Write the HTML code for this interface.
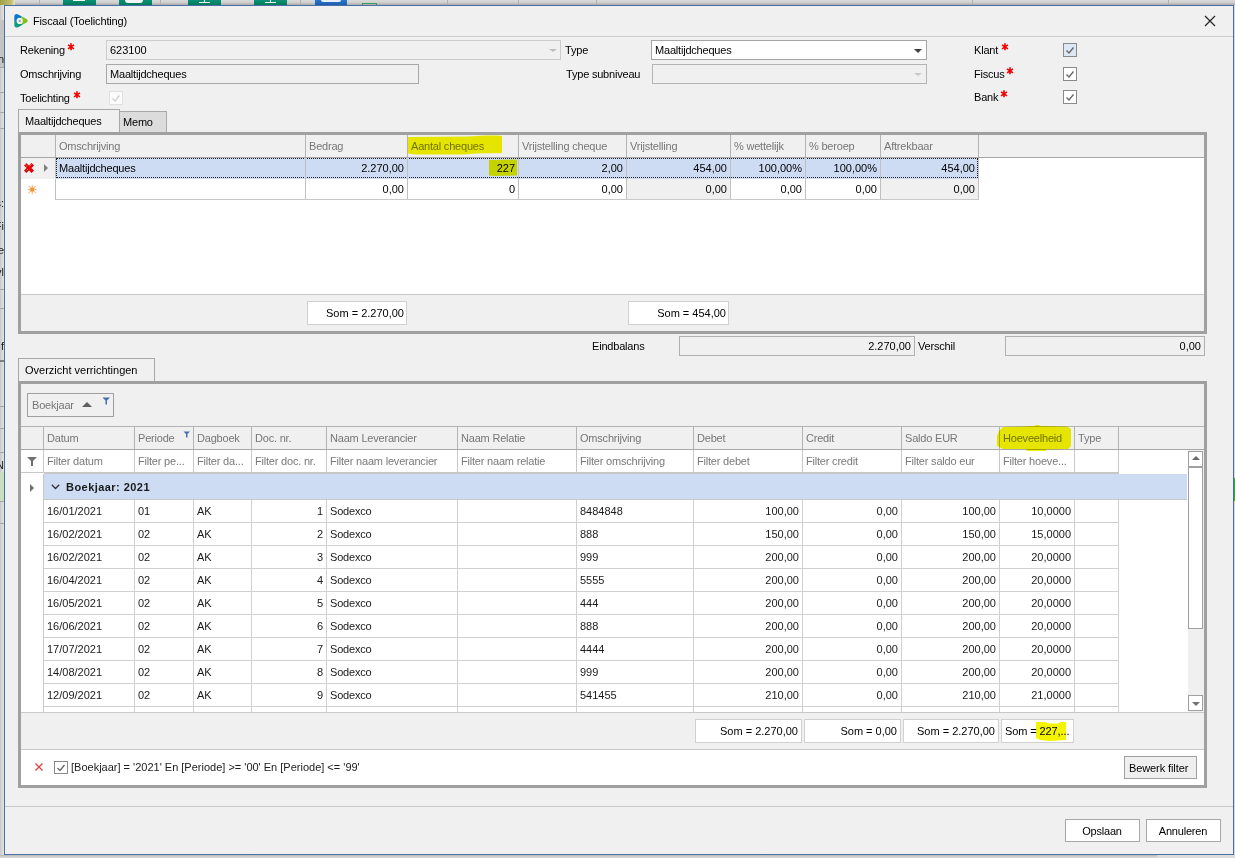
<!DOCTYPE html>
<html><head><meta charset="utf-8"><style>
html,body{margin:0;padding:0;width:1235px;height:858px;overflow:hidden;background:#d0d0d0;}
#root{position:absolute;left:0;top:0;width:1235px;height:858px;will-change:transform;}
.a{position:absolute;}
.t{position:absolute;font-family:"Liberation Sans",sans-serif;font-size:11px;line-height:13px;white-space:pre;color:#000;}
</style></head><body><div id="root">
<div class="a" style="left:0;top:0;width:1235px;height:5px;background:linear-gradient(#dadada,#cfcfcf 50%,#a9a9a9)"></div>
<div class="a" style="left:0;top:0;width:15px;height:5px;background:linear-gradient(90deg,#a0a048,#c0c070 75%,#e8e8c0)"></div>
<div class="a" style="left:63px;top:0;width:33px;height:5px;background:linear-gradient(#0a9274,#007a5c)"></div>
<div class="a" style="left:119px;top:0;width:33px;height:5px;background:linear-gradient(#0a9274,#007a5c)"></div>
<div class="a" style="left:188px;top:0;width:33px;height:5px;background:linear-gradient(#0a9274,#007a5c)"></div>
<div class="a" style="left:254px;top:0;width:33px;height:5px;background:linear-gradient(#0a9274,#007a5c)"></div>
<div class="a" style="left:73px;top:0px;width:12px;height:1px;background:#ffffff;"></div>
<div class="a" style="left:125px;top:0;width:18px;height:3px;background:#f4f4f4;border-radius:0 0 3px 3px"></div>
<div class="a" style="left:204px;top:0px;width:1px;height:3px;background:#ffffff;"></div>
<div class="a" style="left:199px;top:2px;width:11px;height:1px;background:#e8f4f0;"></div>
<div class="a" style="left:270px;top:0px;width:1px;height:3px;background:#ffffff;"></div>
<div class="a" style="left:265px;top:2px;width:11px;height:1px;background:#e8f4f0;"></div>
<div class="a" style="left:315px;top:0;width:32px;height:5px;background:linear-gradient(#2a78d0,#1a5cb0)"></div>
<div class="a" style="left:321px;top:0;width:20px;height:2px;background:#e8eef8;border-radius:0 0 3px 3px"></div>
<div class="a" style="left:362px;top:3px;width:15px;height:1px;background:#3a9a60;"></div>
<div class="a" style="left:362px;top:4px;width:1px;height:1px;background:#3a9a60;"></div>
<div class="a" style="left:376px;top:4px;width:1px;height:1px;background:#3a9a60;"></div>
<div class="a" style="left:39px;top:0px;width:1px;height:5px;background:#b8b0b0;"></div>
<div class="a" style="left:160px;top:0px;width:1px;height:5px;background:#b8b0b0;"></div>
<div class="a" style="left:300px;top:0px;width:1px;height:5px;background:#b8b0b0;"></div>
<div class="a" style="left:447px;top:0px;width:1px;height:5px;background:#b8b0b0;"></div>
<div class="a" style="left:518px;top:0px;width:1px;height:5px;background:#b8b0b0;"></div>
<div class="a" style="left:596px;top:0px;width:1px;height:5px;background:#b8b0b0;"></div>
<div class="a" style="left:972px;top:0px;width:1px;height:5px;background:#b8b0b0;"></div>
<div class="a" style="left:1168px;top:0px;width:1px;height:5px;background:#b8b0b0;"></div>
<div class="a" style="left:0;top:5px;width:4px;height:850px;background:linear-gradient(90deg,#c8c8c8,#e4e4e4)"></div>
<div class="a" style="left:0px;top:20px;width:4px;height:47px;background:#c4c4c4;"></div>
<div class="a" style="left:0px;top:67px;width:4px;height:1px;background:#a8a8a8;"></div>
<div class="a" style="left:0px;top:92px;width:4px;height:1px;background:#a8a8a8;"></div>
<div class="a" style="left:0px;top:112px;width:4px;height:1px;background:#a8a8a8;"></div>
<div class="a" style="left:0px;top:128px;width:4px;height:1px;background:#a8a8a8;"></div>
<div class="a" style="left:0px;top:289px;width:4px;height:1px;background:#a8a8a8;"></div>
<div class="a" style="left:0px;top:308px;width:4px;height:1px;background:#a8a8a8;"></div>
<div class="a" style="left:0px;top:406px;width:4px;height:1px;background:#a8a8a8;"></div>
<div class="a" style="left:0px;top:428px;width:4px;height:1px;background:#a8a8a8;"></div>
<div class="a" style="left:0px;top:452px;width:4px;height:1px;background:#a8a8a8;"></div>
<div class="a" style="left:0px;top:501px;width:4px;height:1px;background:#a8a8a8;"></div>
<div class="a" style="left:0px;top:523px;width:4px;height:1px;background:#a8a8a8;"></div>
<div class="a" style="left:0px;top:360px;width:4px;height:2px;background:#808080;"></div>
<div class="a" style="left:0px;top:472px;width:4px;height:29px;background:#c8e0c0;"></div>
<div class="a" style="left:0;top:0;width:4px;height:858px;overflow:hidden"><div class="t" style="right:0;top:53px;color:#202020">n</div><div class="t" style="right:0;top:197px;color:#202020">s:</div><div class="t" style="right:0;top:220px;color:#202020">Fi</div><div class="t" style="right:0;top:244px;color:#202020">e</div><div class="t" style="right:0;top:266px;color:#202020">yl</div><div class="t" style="right:0;top:340px;color:#202020">f</div><div class="t" style="right:0;top:459px;color:#202020">N</div></div>
<div class="a" style="left:1234px;top:5px;width:1px;height:853px;background:#d8d8d8;"></div>
<div class="a" style="left:1234px;top:478px;width:1px;height:23px;background:#40a040;"></div>
<div class="a" style="left:0;top:855px;width:1235px;height:3px;background:linear-gradient(#b8b8b8,#e0e0e0)"></div>
<div class="a" style="left:1157px;top:855px;width:79px;height:3px;background:#dcdcdc;"></div>
<div class="a" style="left:4px;top:5px;width:1230px;height:850px;background:#f0f0f0;box-sizing:border-box;border:1px solid #4a6fa5;"></div>
<div class="a" style="left:5px;top:36px;width:1228px;height:1px;background:#cfcfcf;"></div>
<svg class="a" style="left:13px;top:13px" width="17" height="17" viewBox="0 0 17 17">
<defs><clipPath id="tri"><path d="M1.3 4.2 Q1.3 0.2 5.2 1.4 L13.6 6 Q15.9 7.8 13.6 9.6 L5.2 14.2 Q1.3 15.6 1.3 11.6 Z"/></clipPath></defs>
<g clip-path="url(#tri)">
<path d="M6.7 7.8 L-19.3 8.8 L-19 -14 L17.2 -14.2 Z" fill="#0a7bcc"/>
<path d="M6.7 7.8 L17.2 -14.2 L30 -14 L30 26 L18.2 25.8 Z" fill="#82c01e"/>
<path d="M6.7 7.8 L18.2 25.8 L-19 26 L-19.3 8.8 Z" fill="#0d9c7e"/>
</g>
<circle cx="6.7" cy="7.9" r="3.1" fill="#f2f2f2"/>
<circle cx="6.8" cy="7.9" r="1.2" fill="#aaaaaa"/>
</svg>
<div class="t " style="left:33px;top:15px;letter-spacing:-0.15px">Fiscaal (Toelichting)</div>
<svg class="a" style="left:1204px;top:15px" width="12" height="12" viewBox="0 0 12 12"><path d="M1 1 L11 11 M11 1 L1 11" stroke="#222" stroke-width="1.2"/></svg>
<div class="t " style="left:20px;top:44px;letter-spacing:-0.2px;">Rekening</div>
<svg class="a" style="left:67px;top:43px" width="8" height="8" viewBox="0 0 8 8"><path d="M4 0.3 V7.3 M1 1.8 L7 5.8 M7 1.8 L1 5.8" stroke="#f00000" stroke-width="1.6"/></svg>
<div class="t " style="left:20px;top:68px;letter-spacing:-0.2px;">Omschrijving</div>
<div class="t " style="left:20px;top:92px;letter-spacing:-0.2px;">Toelichting</div>
<svg class="a" style="left:73px;top:91px" width="8" height="8" viewBox="0 0 8 8"><path d="M4 0.3 V7.3 M1 1.8 L7 5.8 M7 1.8 L1 5.8" stroke="#f00000" stroke-width="1.6"/></svg>
<div class="a" style="left:106px;top:40px;width:455px;height:20px;background:#f0f0f0;box-sizing:border-box;border:1px solid #cccccc;"></div>
<div class="t " style="left:110px;top:44px;">623100</div>
<div class="a" style="left:549px;top:49px;width:0;height:0;border-left:4px solid transparent;border-right:4px solid transparent;border-top:3px solid #c0c0c0"></div>
<div class="a" style="left:106px;top:64px;width:313px;height:20px;background:#f0f0f0;box-sizing:border-box;border:1px solid #a8a8a8;"></div>
<div class="t " style="left:110px;top:68px;letter-spacing:-0.2px;">Maaltijdcheques</div>
<div class="a" style="left:109px;top:91px;width:14px;height:14px;background:#fbfbfb;box-sizing:border-box;border:1px solid #e0e0e0;"></div>
<svg class="a" style="left:109px;top:91px" width="14" height="14"><path d="M3.5 7.5 L6 10 L10.5 4.5" stroke="#d0d0d0" stroke-width="1.3" fill="none"/></svg>
<div class="t " style="left:565px;top:44px;letter-spacing:-0.2px;">Type</div>
<div class="t " style="left:566px;top:68px;letter-spacing:-0.2px;">Type subniveau</div>
<div class="a" style="left:651px;top:40px;width:276px;height:20px;background:#ffffff;box-sizing:border-box;border:1px solid #a5a5a5;"></div>
<div class="t " style="left:655px;top:44px;letter-spacing:-0.2px;">Maaltijdcheques</div>
<div class="a" style="left:914px;top:49px;width:0;height:0;border-left:4px solid transparent;border-right:4px solid transparent;border-top:4px solid #404040"></div>
<div class="a" style="left:652px;top:64px;width:275px;height:20px;background:#f0f0f0;box-sizing:border-box;border:1px solid #b4b4b4;"></div>
<div class="a" style="left:914px;top:73px;width:0;height:0;border-left:4px solid transparent;border-right:4px solid transparent;border-top:3px solid #c8c8c8"></div>
<div class="t " style="left:974px;top:44px;letter-spacing:-0.2px;">Klant</div>
<svg class="a" style="left:1001px;top:43px" width="8" height="8" viewBox="0 0 8 8"><path d="M4 0.3 V7.3 M1 1.8 L7 5.8 M7 1.8 L1 5.8" stroke="#f00000" stroke-width="1.6"/></svg>
<div class="t " style="left:974px;top:68px;letter-spacing:-0.2px;">Fiscus</div>
<svg class="a" style="left:1006px;top:67px" width="8" height="8" viewBox="0 0 8 8"><path d="M4 0.3 V7.3 M1 1.8 L7 5.8 M7 1.8 L1 5.8" stroke="#f00000" stroke-width="1.6"/></svg>
<div class="t " style="left:974px;top:91px;letter-spacing:-0.2px;">Bank</div>
<svg class="a" style="left:1000px;top:90px" width="8" height="8" viewBox="0 0 8 8"><path d="M4 0.3 V7.3 M1 1.8 L7 5.8 M7 1.8 L1 5.8" stroke="#f00000" stroke-width="1.6"/></svg>
<div class="a" style="left:1063px;top:43px;width:14px;height:14px;background:#dde8f6;box-sizing:border-box;border:1px solid #8a8a8a;"></div>
<svg class="a" style="left:1063px;top:43px" width="14" height="14"><path d="M3.5 7.5 L6 10 L10.5 4.5" stroke="#6a6a6a" stroke-width="1.4" fill="none"/></svg>
<div class="a" style="left:1063px;top:67px;width:14px;height:14px;background:#ffffff;box-sizing:border-box;border:1px solid #8a8a8a;"></div>
<svg class="a" style="left:1063px;top:67px" width="14" height="14"><path d="M3.5 7.5 L6 10 L10.5 4.5" stroke="#6a6a6a" stroke-width="1.4" fill="none"/></svg>
<div class="a" style="left:1063px;top:90px;width:14px;height:14px;background:#ffffff;box-sizing:border-box;border:1px solid #8a8a8a;"></div>
<svg class="a" style="left:1063px;top:90px" width="14" height="14"><path d="M3.5 7.5 L6 10 L10.5 4.5" stroke="#6a6a6a" stroke-width="1.4" fill="none"/></svg>
<div class="a" style="left:119px;top:111px;width:48px;height:23px;background:#dcdcdc;box-sizing:border-box;border:1px solid #a8a8a8;"></div>
<div class="t " style="left:123px;top:116px;letter-spacing:-0.2px;">Memo</div>
<div class="a" style="left:18px;top:109px;width:102px;height:25px;background:#f0f0f0;box-sizing:border-box;border:1px solid #a8a8a8;"></div>
<div class="t " style="left:25px;top:115px;letter-spacing:-0.2px;">Maaltijdcheques</div>
<div class="a" style="left:18px;top:132px;width:1189px;height:3px;background:#a0a0a0;"></div>
<div class="a" style="left:18px;top:132px;width:3px;height:202px;background:#a0a0a0;"></div>
<div class="a" style="left:1204px;top:132px;width:3px;height:202px;background:#a0a0a0;"></div>
<div class="a" style="left:18px;top:331px;width:1189px;height:3px;background:#a0a0a0;"></div>
<div class="a" style="left:21px;top:135px;width:1183px;height:22px;background:#f0f0f0;"></div>
<div class="a" style="left:21px;top:157px;width:1183px;height:1px;background:#a8a8a8;"></div>
<div class="a" style="left:21px;top:158px;width:1183px;height:136px;background:#ffffff;"></div>
<div class="a" style="left:21px;top:294px;width:1183px;height:1px;background:#c8c8c8;"></div>
<div class="a" style="left:21px;top:295px;width:1183px;height:36px;background:#f0f0f0;"></div>
<div class="a" style="left:55px;top:135px;width:1px;height:22px;background:#b4b4b4;"></div>
<div class="a" style="left:305px;top:135px;width:1px;height:22px;background:#b4b4b4;"></div>
<div class="a" style="left:407px;top:135px;width:1px;height:22px;background:#b4b4b4;"></div>
<div class="a" style="left:518px;top:135px;width:1px;height:22px;background:#b4b4b4;"></div>
<div class="a" style="left:626px;top:135px;width:1px;height:22px;background:#b4b4b4;"></div>
<div class="a" style="left:730px;top:135px;width:1px;height:22px;background:#b4b4b4;"></div>
<div class="a" style="left:805px;top:135px;width:1px;height:22px;background:#b4b4b4;"></div>
<div class="a" style="left:880px;top:135px;width:1px;height:22px;background:#b4b4b4;"></div>
<div class="a" style="left:978px;top:135px;width:1px;height:22px;background:#b4b4b4;"></div>
<div class="t " style="left:59px;top:140px;letter-spacing:-0.2px;color:#777777;">Omschrijving</div>
<div class="t " style="left:309px;top:140px;letter-spacing:-0.2px;color:#777777;">Bedrag</div>
<div class="t " style="left:411px;top:140px;letter-spacing:-0.2px;color:#777777;">Aantal cheques</div>
<div class="t " style="left:522px;top:140px;letter-spacing:-0.2px;color:#777777;">Vrijstelling cheque</div>
<div class="t " style="left:630px;top:140px;letter-spacing:-0.2px;color:#777777;">Vrijstelling</div>
<div class="t " style="left:734px;top:140px;letter-spacing:-0.2px;color:#777777;">% wettelijk</div>
<div class="t " style="left:809px;top:140px;letter-spacing:-0.2px;color:#777777;">% beroep</div>
<div class="t " style="left:884px;top:140px;letter-spacing:-0.2px;color:#777777;">Aftrekbaar</div>
<div class="a" style="left:21px;top:158px;width:34px;height:21px;background:#f0f0f0;"></div>
<div class="a" style="left:56px;top:158px;width:922px;height:21px;background:#cddcf3;"></div>
<div class="a" style="left:56px;top:158px;width:922px;height:20px;box-sizing:border-box;border:1px dotted #202020"></div>
<div class="a" style="left:626px;top:179px;width:104px;height:21px;background:#f0f0f0;"></div>
<div class="a" style="left:880px;top:179px;width:98px;height:21px;background:#f0f0f0;"></div>
<div class="a" style="left:55px;top:158px;width:1px;height:42px;background:#c0c0c0;"></div>
<div class="a" style="left:305px;top:158px;width:1px;height:42px;background:#c0c0c0;"></div>
<div class="a" style="left:407px;top:158px;width:1px;height:42px;background:#c0c0c0;"></div>
<div class="a" style="left:518px;top:158px;width:1px;height:42px;background:#c0c0c0;"></div>
<div class="a" style="left:626px;top:158px;width:1px;height:42px;background:#c0c0c0;"></div>
<div class="a" style="left:730px;top:158px;width:1px;height:42px;background:#c0c0c0;"></div>
<div class="a" style="left:805px;top:158px;width:1px;height:42px;background:#c0c0c0;"></div>
<div class="a" style="left:880px;top:158px;width:1px;height:42px;background:#c0c0c0;"></div>
<div class="a" style="left:978px;top:158px;width:1px;height:42px;background:#c0c0c0;"></div>
<div class="a" style="left:56px;top:199px;width:923px;height:1px;background:#c8c8c8;"></div>
<div class="a" style="left:21px;top:178px;width:35px;height:1px;background:#f0f0f0;"></div>
<svg class="a" style="left:23px;top:162px" width="12" height="12" viewBox="0 0 12 12"><path d="M2.2 2.2 L9.8 9.8 M9.8 2.2 L2.2 9.8" stroke="#e00000" stroke-width="3.4"/><path d="M4 6 L6 4 L8 6 L6 8 Z" fill="#f00000"/><path d="M1.8 3.2 L3.4 1.8 M3 4.6 L4.6 3.2 M8.4 2.4 L6.6 4.2 M5 7 L3.4 8.6" stroke="#ffd0d0" stroke-width="0.7" opacity="0.8"/></svg>
<div class="a" style="left:44px;top:164px;width:0;height:0;border-top:4px solid transparent;border-bottom:4px solid transparent;border-left:4px solid #808080"></div>
<svg class="a" style="left:26px;top:183px" width="13" height="13" viewBox="0 0 13 13"><g fill="#f0a050" opacity="0.85"><path d="M6.2 1 L7 4.5 L5.4 4.5 Z M6.2 12 L7 8.5 L5.4 8.5 Z M0.5 6.5 L4 5.7 L4 7.3 Z M12 6.5 L8.5 5.7 L8.5 7.3 Z"/></g><g stroke="#f0a050" stroke-width="1"><path d="M2.6 2.9 L4.5 4.8 M9.8 2.9 L7.9 4.8 M2.6 10.1 L4.5 8.2 M9.8 10.1 L7.9 8.2"/></g><rect x="4.2" y="4.4" width="4" height="4.2" rx="1.2" fill="#ee9236"/></svg>
<div class="t " style="left:59px;top:162px;letter-spacing:-0.2px;">Maaltijdcheques</div>
<div class="t " style="right:831px;top:162px;">2.270,00</div>
<div class="t " style="right:720px;top:162px;">227</div>
<div class="t " style="right:612px;top:162px;">2,00</div>
<div class="t " style="right:508px;top:162px;">454,00</div>
<div class="t " style="right:433px;top:162px;">100,00%</div>
<div class="t " style="right:358px;top:162px;">100,00%</div>
<div class="t " style="right:260px;top:162px;">454,00</div>
<div class="t " style="right:831px;top:183px;">0,00</div>
<div class="t " style="right:720px;top:183px;">0</div>
<div class="t " style="right:612px;top:183px;">0,00</div>
<div class="t " style="right:508px;top:183px;">0,00</div>
<div class="t " style="right:433px;top:183px;">0,00</div>
<div class="t " style="right:358px;top:183px;">0,00</div>
<div class="t " style="right:260px;top:183px;">0,00</div>
<div class="a" style="left:307px;top:301px;width:100px;height:24px;background:#ffffff;box-sizing:border-box;border:1px solid #d0d0d0;"></div>
<div class="t " style="right:831px;top:307px;">Som = 2.270,00</div>
<div class="a" style="left:628px;top:301px;width:101px;height:24px;background:#ffffff;box-sizing:border-box;border:1px solid #d0d0d0;"></div>
<div class="t " style="right:509px;top:307px;">Som = 454,00</div>
<div class="t " style="left:592px;top:340px;letter-spacing:-0.2px;">Eindbalans</div>
<div class="a" style="left:679px;top:336px;width:236px;height:20px;background:#f0f0f0;box-sizing:border-box;border:1px solid #b0b0b0;"></div>
<div class="t " style="right:324px;top:340px;">2.270,00</div>
<div class="t " style="left:918px;top:340px;letter-spacing:-0.2px;">Verschil</div>
<div class="a" style="left:1005px;top:336px;width:200px;height:20px;background:#f0f0f0;box-sizing:border-box;border:1px solid #b0b0b0;"></div>
<div class="t " style="right:34px;top:340px;">0,00</div>
<div class="a" style="left:18px;top:358px;width:137px;height:26px;background:#f0f0f0;box-sizing:border-box;border:1px solid #a8a8a8;"></div>
<div class="t " style="left:25px;top:364px;">Overzicht verrichtingen</div>
<div class="a" style="left:18px;top:381px;width:1189px;height:3px;background:#a0a0a0;"></div>
<div class="a" style="left:18px;top:381px;width:3px;height:407px;background:#a0a0a0;"></div>
<div class="a" style="left:1204px;top:381px;width:3px;height:407px;background:#a0a0a0;"></div>
<div class="a" style="left:18px;top:785px;width:1189px;height:3px;background:#a0a0a0;"></div>
<div class="a" style="left:21px;top:384px;width:1183px;height:42px;background:#f0f0f0;"></div>
<div class="a" style="left:21px;top:426px;width:1183px;height:1px;background:#b4b4b4;"></div>
<div class="a" style="left:27px;top:393px;width:87px;height:24px;background:#f0f0f0;box-sizing:border-box;border:1px solid #a0a0a0;"></div>
<div class="t " style="left:32px;top:399px;letter-spacing:-0.2px;color:#777777;">Boekjaar</div>
<div class="a" style="left:82px;top:402px;width:0;height:0;border-left:5px solid transparent;border-right:5px solid transparent;border-bottom:5px solid #606060"></div>
<svg class="a" style="left:102px;top:397px" width="9" height="8"><path d="M0.5 0.5 H8 L5 3.5 V7.5 H3.5 V3.5 Z" fill="#4a6fb0"/></svg>
<div class="a" style="left:21px;top:427px;width:1183px;height:22px;background:#f0f0f0;"></div>
<div class="a" style="left:21px;top:449px;width:1183px;height:1px;background:#a8a8a8;"></div>
<div class="a" style="left:43px;top:427px;width:1px;height:22px;background:#b4b4b4;"></div>
<div class="a" style="left:134px;top:427px;width:1px;height:22px;background:#b4b4b4;"></div>
<div class="a" style="left:193px;top:427px;width:1px;height:22px;background:#b4b4b4;"></div>
<div class="a" style="left:251px;top:427px;width:1px;height:22px;background:#b4b4b4;"></div>
<div class="a" style="left:326px;top:427px;width:1px;height:22px;background:#b4b4b4;"></div>
<div class="a" style="left:457px;top:427px;width:1px;height:22px;background:#b4b4b4;"></div>
<div class="a" style="left:576px;top:427px;width:1px;height:22px;background:#b4b4b4;"></div>
<div class="a" style="left:693px;top:427px;width:1px;height:22px;background:#b4b4b4;"></div>
<div class="a" style="left:802px;top:427px;width:1px;height:22px;background:#b4b4b4;"></div>
<div class="a" style="left:901px;top:427px;width:1px;height:22px;background:#b4b4b4;"></div>
<div class="a" style="left:999px;top:427px;width:1px;height:22px;background:#b4b4b4;"></div>
<div class="a" style="left:1074px;top:427px;width:1px;height:22px;background:#b4b4b4;"></div>
<div class="a" style="left:1118px;top:427px;width:1px;height:22px;background:#b4b4b4;"></div>
<div class="t " style="left:47px;top:432px;letter-spacing:-0.2px;color:#777777;">Datum</div>
<div class="t " style="left:138px;top:432px;letter-spacing:-0.2px;color:#777777;">Periode</div>
<div class="t " style="left:197px;top:432px;letter-spacing:-0.2px;color:#777777;">Dagboek</div>
<div class="t " style="left:255px;top:432px;letter-spacing:-0.2px;color:#777777;">Doc. nr.</div>
<div class="t " style="left:330px;top:432px;letter-spacing:-0.2px;color:#777777;">Naam Leverancier</div>
<div class="t " style="left:461px;top:432px;letter-spacing:-0.2px;color:#777777;">Naam Relatie</div>
<div class="t " style="left:580px;top:432px;letter-spacing:-0.2px;color:#777777;">Omschrijving</div>
<div class="t " style="left:697px;top:432px;letter-spacing:-0.2px;color:#777777;">Debet</div>
<div class="t " style="left:806px;top:432px;letter-spacing:-0.2px;color:#777777;">Credit</div>
<div class="t " style="left:905px;top:432px;letter-spacing:-0.2px;color:#777777;">Saldo EUR</div>
<div class="t " style="left:1003px;top:432px;letter-spacing:-0.2px;color:#777777;">Hoeveelheid</div>
<div class="t " style="left:1078px;top:432px;letter-spacing:-0.2px;color:#777777;">Type</div>
<svg class="a" style="left:183px;top:431px" width="8" height="7"><path d="M0.5 0.5 H7 L4.5 3 V6.5 H3 V3 Z" fill="#4a6fb0"/></svg>
<div class="a" style="left:21px;top:450px;width:1167px;height:262px;background:#ffffff;"></div>
<div class="a" style="left:43px;top:450px;width:1px;height:22px;background:#c8c8c8;"></div>
<div class="a" style="left:134px;top:450px;width:1px;height:22px;background:#c8c8c8;"></div>
<div class="a" style="left:193px;top:450px;width:1px;height:22px;background:#c8c8c8;"></div>
<div class="a" style="left:251px;top:450px;width:1px;height:22px;background:#c8c8c8;"></div>
<div class="a" style="left:326px;top:450px;width:1px;height:22px;background:#c8c8c8;"></div>
<div class="a" style="left:457px;top:450px;width:1px;height:22px;background:#c8c8c8;"></div>
<div class="a" style="left:576px;top:450px;width:1px;height:22px;background:#c8c8c8;"></div>
<div class="a" style="left:693px;top:450px;width:1px;height:22px;background:#c8c8c8;"></div>
<div class="a" style="left:802px;top:450px;width:1px;height:22px;background:#c8c8c8;"></div>
<div class="a" style="left:901px;top:450px;width:1px;height:22px;background:#c8c8c8;"></div>
<div class="a" style="left:999px;top:450px;width:1px;height:22px;background:#c8c8c8;"></div>
<div class="a" style="left:1074px;top:450px;width:1px;height:22px;background:#c8c8c8;"></div>
<div class="a" style="left:1118px;top:450px;width:1px;height:22px;background:#c8c8c8;"></div>
<div class="a" style="left:21px;top:472px;width:23px;height:1px;background:#c8c8c8;"></div>
<div class="a" style="left:44px;top:472px;width:1075px;height:2px;background:#c8c8c8;"></div>
<div class="t " style="left:47px;top:455px;letter-spacing:-0.2px;color:#7a7a7a;">Filter datum</div>
<div class="t " style="left:138px;top:455px;letter-spacing:-0.2px;color:#7a7a7a;">Filter pe...</div>
<div class="t " style="left:197px;top:455px;letter-spacing:-0.2px;color:#7a7a7a;">Filter da...</div>
<div class="t " style="left:255px;top:455px;letter-spacing:-0.2px;color:#7a7a7a;">Filter doc. nr.</div>
<div class="t " style="left:330px;top:455px;letter-spacing:-0.2px;color:#7a7a7a;">Filter naam leverancier</div>
<div class="t " style="left:461px;top:455px;letter-spacing:-0.2px;color:#7a7a7a;">Filter naam relatie</div>
<div class="t " style="left:580px;top:455px;letter-spacing:-0.2px;color:#7a7a7a;">Filter omschrijving</div>
<div class="t " style="left:697px;top:455px;letter-spacing:-0.2px;color:#7a7a7a;">Filter debet</div>
<div class="t " style="left:806px;top:455px;letter-spacing:-0.2px;color:#7a7a7a;">Filter credit</div>
<div class="t " style="left:905px;top:455px;letter-spacing:-0.2px;color:#7a7a7a;">Filter saldo eur</div>
<div class="t " style="left:1003px;top:455px;letter-spacing:-0.2px;color:#7a7a7a;">Filter hoeve...</div>
<svg class="a" style="left:27px;top:457px" width="11" height="9"><path d="M0 0 H10 L6 4 V9 H4 V4 Z" fill="#707070"/></svg>
<div class="a" style="left:21px;top:474px;width:1167px;height:238px;background:#ffffff;"></div>
<div class="a" style="left:44px;top:474px;width:1143px;height:25px;background:#cddcf3;"></div>
<div class="a" style="left:44px;top:499px;width:1143px;height:1px;background:#c8c8c8;"></div>
<div class="a" style="left:30px;top:484px;width:0;height:0;border-top:4px solid transparent;border-bottom:4px solid transparent;border-left:4px solid #707070"></div>
<svg class="a" style="left:51px;top:484px" width="9" height="6"><path d="M0.8 0.8 L4.5 4.5 L8.2 0.8" stroke="#303030" stroke-width="1.3" fill="none"/></svg>
<div class="t " style="left:66px;top:481px;color:#1a1a1a;font-weight:bold;letter-spacing:0.45px">Boekjaar: 2021</div>
<div class="a" style="left:43px;top:474px;width:1px;height:238px;background:#c8c8c8;"></div>
<div class="a" style="left:44px;top:522px;width:1075px;height:1px;background:#d0d0d0;"></div>
<div class="t " style="left:47px;top:505px;color:#1a1a1a;">16/01/2021</div>
<div class="t " style="left:138px;top:505px;color:#1a1a1a;">01</div>
<div class="t " style="left:197px;top:505px;letter-spacing:-0.2px;color:#1a1a1a;">AK</div>
<div class="t " style="right:912px;top:505px;color:#1a1a1a;">1</div>
<div class="t " style="left:330px;top:505px;letter-spacing:-0.2px;color:#1a1a1a;">Sodexco</div>
<div class="t " style="left:580px;top:505px;color:#1a1a1a;">8484848</div>
<div class="t " style="right:436px;top:505px;color:#1a1a1a;">100,00</div>
<div class="t " style="right:337px;top:505px;color:#1a1a1a;">0,00</div>
<div class="t " style="right:239px;top:505px;color:#1a1a1a;">100,00</div>
<div class="t " style="right:164px;top:505px;color:#1a1a1a;">10,0000</div>
<div class="a" style="left:44px;top:545px;width:1075px;height:1px;background:#d0d0d0;"></div>
<div class="t " style="left:47px;top:528px;color:#1a1a1a;">16/02/2021</div>
<div class="t " style="left:138px;top:528px;color:#1a1a1a;">02</div>
<div class="t " style="left:197px;top:528px;letter-spacing:-0.2px;color:#1a1a1a;">AK</div>
<div class="t " style="right:912px;top:528px;color:#1a1a1a;">2</div>
<div class="t " style="left:330px;top:528px;letter-spacing:-0.2px;color:#1a1a1a;">Sodexco</div>
<div class="t " style="left:580px;top:528px;color:#1a1a1a;">888</div>
<div class="t " style="right:436px;top:528px;color:#1a1a1a;">150,00</div>
<div class="t " style="right:337px;top:528px;color:#1a1a1a;">0,00</div>
<div class="t " style="right:239px;top:528px;color:#1a1a1a;">150,00</div>
<div class="t " style="right:164px;top:528px;color:#1a1a1a;">15,0000</div>
<div class="a" style="left:44px;top:568px;width:1075px;height:1px;background:#d0d0d0;"></div>
<div class="t " style="left:47px;top:551px;color:#1a1a1a;">16/02/2021</div>
<div class="t " style="left:138px;top:551px;color:#1a1a1a;">02</div>
<div class="t " style="left:197px;top:551px;letter-spacing:-0.2px;color:#1a1a1a;">AK</div>
<div class="t " style="right:912px;top:551px;color:#1a1a1a;">3</div>
<div class="t " style="left:330px;top:551px;letter-spacing:-0.2px;color:#1a1a1a;">Sodexco</div>
<div class="t " style="left:580px;top:551px;color:#1a1a1a;">999</div>
<div class="t " style="right:436px;top:551px;color:#1a1a1a;">200,00</div>
<div class="t " style="right:337px;top:551px;color:#1a1a1a;">0,00</div>
<div class="t " style="right:239px;top:551px;color:#1a1a1a;">200,00</div>
<div class="t " style="right:164px;top:551px;color:#1a1a1a;">20,0000</div>
<div class="a" style="left:44px;top:591px;width:1075px;height:1px;background:#d0d0d0;"></div>
<div class="t " style="left:47px;top:574px;color:#1a1a1a;">16/04/2021</div>
<div class="t " style="left:138px;top:574px;color:#1a1a1a;">02</div>
<div class="t " style="left:197px;top:574px;letter-spacing:-0.2px;color:#1a1a1a;">AK</div>
<div class="t " style="right:912px;top:574px;color:#1a1a1a;">4</div>
<div class="t " style="left:330px;top:574px;letter-spacing:-0.2px;color:#1a1a1a;">Sodexco</div>
<div class="t " style="left:580px;top:574px;color:#1a1a1a;">5555</div>
<div class="t " style="right:436px;top:574px;color:#1a1a1a;">200,00</div>
<div class="t " style="right:337px;top:574px;color:#1a1a1a;">0,00</div>
<div class="t " style="right:239px;top:574px;color:#1a1a1a;">200,00</div>
<div class="t " style="right:164px;top:574px;color:#1a1a1a;">20,0000</div>
<div class="a" style="left:44px;top:614px;width:1075px;height:1px;background:#d0d0d0;"></div>
<div class="t " style="left:47px;top:597px;color:#1a1a1a;">16/05/2021</div>
<div class="t " style="left:138px;top:597px;color:#1a1a1a;">02</div>
<div class="t " style="left:197px;top:597px;letter-spacing:-0.2px;color:#1a1a1a;">AK</div>
<div class="t " style="right:912px;top:597px;color:#1a1a1a;">5</div>
<div class="t " style="left:330px;top:597px;letter-spacing:-0.2px;color:#1a1a1a;">Sodexco</div>
<div class="t " style="left:580px;top:597px;color:#1a1a1a;">444</div>
<div class="t " style="right:436px;top:597px;color:#1a1a1a;">200,00</div>
<div class="t " style="right:337px;top:597px;color:#1a1a1a;">0,00</div>
<div class="t " style="right:239px;top:597px;color:#1a1a1a;">200,00</div>
<div class="t " style="right:164px;top:597px;color:#1a1a1a;">20,0000</div>
<div class="a" style="left:44px;top:637px;width:1075px;height:1px;background:#d0d0d0;"></div>
<div class="t " style="left:47px;top:620px;color:#1a1a1a;">16/06/2021</div>
<div class="t " style="left:138px;top:620px;color:#1a1a1a;">02</div>
<div class="t " style="left:197px;top:620px;letter-spacing:-0.2px;color:#1a1a1a;">AK</div>
<div class="t " style="right:912px;top:620px;color:#1a1a1a;">6</div>
<div class="t " style="left:330px;top:620px;letter-spacing:-0.2px;color:#1a1a1a;">Sodexco</div>
<div class="t " style="left:580px;top:620px;color:#1a1a1a;">888</div>
<div class="t " style="right:436px;top:620px;color:#1a1a1a;">200,00</div>
<div class="t " style="right:337px;top:620px;color:#1a1a1a;">0,00</div>
<div class="t " style="right:239px;top:620px;color:#1a1a1a;">200,00</div>
<div class="t " style="right:164px;top:620px;color:#1a1a1a;">20,0000</div>
<div class="a" style="left:44px;top:660px;width:1075px;height:1px;background:#d0d0d0;"></div>
<div class="t " style="left:47px;top:643px;color:#1a1a1a;">17/07/2021</div>
<div class="t " style="left:138px;top:643px;color:#1a1a1a;">02</div>
<div class="t " style="left:197px;top:643px;letter-spacing:-0.2px;color:#1a1a1a;">AK</div>
<div class="t " style="right:912px;top:643px;color:#1a1a1a;">7</div>
<div class="t " style="left:330px;top:643px;letter-spacing:-0.2px;color:#1a1a1a;">Sodexco</div>
<div class="t " style="left:580px;top:643px;color:#1a1a1a;">4444</div>
<div class="t " style="right:436px;top:643px;color:#1a1a1a;">200,00</div>
<div class="t " style="right:337px;top:643px;color:#1a1a1a;">0,00</div>
<div class="t " style="right:239px;top:643px;color:#1a1a1a;">200,00</div>
<div class="t " style="right:164px;top:643px;color:#1a1a1a;">20,0000</div>
<div class="a" style="left:44px;top:683px;width:1075px;height:1px;background:#d0d0d0;"></div>
<div class="t " style="left:47px;top:666px;color:#1a1a1a;">14/08/2021</div>
<div class="t " style="left:138px;top:666px;color:#1a1a1a;">02</div>
<div class="t " style="left:197px;top:666px;letter-spacing:-0.2px;color:#1a1a1a;">AK</div>
<div class="t " style="right:912px;top:666px;color:#1a1a1a;">8</div>
<div class="t " style="left:330px;top:666px;letter-spacing:-0.2px;color:#1a1a1a;">Sodexco</div>
<div class="t " style="left:580px;top:666px;color:#1a1a1a;">999</div>
<div class="t " style="right:436px;top:666px;color:#1a1a1a;">200,00</div>
<div class="t " style="right:337px;top:666px;color:#1a1a1a;">0,00</div>
<div class="t " style="right:239px;top:666px;color:#1a1a1a;">200,00</div>
<div class="t " style="right:164px;top:666px;color:#1a1a1a;">20,0000</div>
<div class="a" style="left:44px;top:706px;width:1075px;height:1px;background:#d0d0d0;"></div>
<div class="t " style="left:47px;top:689px;color:#1a1a1a;">12/09/2021</div>
<div class="t " style="left:138px;top:689px;color:#1a1a1a;">02</div>
<div class="t " style="left:197px;top:689px;letter-spacing:-0.2px;color:#1a1a1a;">AK</div>
<div class="t " style="right:912px;top:689px;color:#1a1a1a;">9</div>
<div class="t " style="left:330px;top:689px;letter-spacing:-0.2px;color:#1a1a1a;">Sodexco</div>
<div class="t " style="left:580px;top:689px;color:#1a1a1a;">541455</div>
<div class="t " style="right:436px;top:689px;color:#1a1a1a;">210,00</div>
<div class="t " style="right:337px;top:689px;color:#1a1a1a;">0,00</div>
<div class="t " style="right:239px;top:689px;color:#1a1a1a;">210,00</div>
<div class="t " style="right:164px;top:689px;color:#1a1a1a;">21,0000</div>
<div class="a" style="left:134px;top:500px;width:1px;height:212px;background:#d0d0d0;"></div>
<div class="a" style="left:193px;top:500px;width:1px;height:212px;background:#d0d0d0;"></div>
<div class="a" style="left:251px;top:500px;width:1px;height:212px;background:#d0d0d0;"></div>
<div class="a" style="left:326px;top:500px;width:1px;height:212px;background:#d0d0d0;"></div>
<div class="a" style="left:457px;top:500px;width:1px;height:212px;background:#d0d0d0;"></div>
<div class="a" style="left:576px;top:500px;width:1px;height:212px;background:#d0d0d0;"></div>
<div class="a" style="left:693px;top:500px;width:1px;height:212px;background:#d0d0d0;"></div>
<div class="a" style="left:802px;top:500px;width:1px;height:212px;background:#d0d0d0;"></div>
<div class="a" style="left:901px;top:500px;width:1px;height:212px;background:#d0d0d0;"></div>
<div class="a" style="left:999px;top:500px;width:1px;height:212px;background:#d0d0d0;"></div>
<div class="a" style="left:1074px;top:500px;width:1px;height:212px;background:#d0d0d0;"></div>
<div class="a" style="left:1118px;top:500px;width:1px;height:212px;background:#d0d0d0;"></div>
<div class="a" style="left:1188px;top:451px;width:16px;height:261px;background:#f0f0f0;"></div>
<div class="a" style="left:1188px;top:451px;width:15px;height:16px;background:#ffffff;box-sizing:border-box;border:1px solid #a0a0a0;"></div>
<div class="a" style="left:1192px;top:456px;width:0;height:0;border-left:4px solid transparent;border-right:4px solid transparent;border-bottom:4px solid #6a6a6a"></div>
<div class="a" style="left:1188px;top:467px;width:15px;height:162px;background:#ffffff;box-sizing:border-box;border:1px solid #a0a0a0;"></div>
<div class="a" style="left:1188px;top:695px;width:15px;height:16px;background:#ffffff;box-sizing:border-box;border:1px solid #a0a0a0;"></div>
<div class="a" style="left:1192px;top:702px;width:0;height:0;border-left:4px solid transparent;border-right:4px solid transparent;border-top:4px solid #707070"></div>
<div class="a" style="left:21px;top:712px;width:1183px;height:1px;background:#c8c8c8;"></div>
<div class="a" style="left:21px;top:713px;width:1183px;height:36px;background:#f0f0f0;"></div>
<div class="a" style="left:21px;top:749px;width:1183px;height:1px;background:#c8c8c8;"></div>
<div class="a" style="left:695px;top:719px;width:107px;height:24px;background:#ffffff;box-sizing:border-box;border:1px solid #d0d0d0;"></div>
<div class="a" style="left:804px;top:719px;width:97px;height:24px;background:#ffffff;box-sizing:border-box;border:1px solid #d0d0d0;"></div>
<div class="a" style="left:903px;top:719px;width:96px;height:24px;background:#ffffff;box-sizing:border-box;border:1px solid #d0d0d0;"></div>
<div class="a" style="left:1001px;top:719px;width:73px;height:24px;background:#ffffff;box-sizing:border-box;border:1px solid #d0d0d0;"></div>
<div class="t " style="right:437px;top:725px;">Som = 2.270,00</div>
<div class="t " style="right:338px;top:725px;">Som = 0,00</div>
<div class="t " style="right:240px;top:725px;">Som = 2.270,00</div>
<div class="t " style="left:1005px;top:725px;letter-spacing:-0.1px">Som = 227,...</div>
<div class="a" style="left:21px;top:750px;width:1183px;height:35px;background:#ffffff;"></div>
<svg class="a" style="left:35px;top:763px" width="8" height="8"><path d="M0.5 0.5 L7.5 7.5 M7.5 0.5 L0.5 7.5" stroke="#e04040" stroke-width="1.3"/></svg>
<div class="a" style="left:54px;top:761px;width:14px;height:13px;background:#ffffff;box-sizing:border-box;border:1px solid #8a8a8a;"></div>
<svg class="a" style="left:54px;top:761px" width="14" height="13"><path d="M3.5 7 L6 9.5 L10.5 4" stroke="#6a6a6a" stroke-width="1.4" fill="none"/></svg>
<div class="t " style="left:71px;top:761px;color:#1a1a1a;">[Boekjaar] = '2021' En [Periode] &gt;= '00' En [Periode] &lt;= '99'</div>
<div class="a" style="left:1124px;top:756px;width:73px;height:23px;background:#efefef;box-sizing:border-box;border:1px solid #a0a0a0;"></div>
<div class="t " style="left:1129px;top:762px;letter-spacing:-0.1px">Bewerk filter</div>
<div class="a" style="left:5px;top:806px;width:1228px;height:1px;background:#c8c8c8;"></div>
<svg class="a" style="left:0;top:0;mix-blend-mode:multiply" width="1235" height="858"><polygon points="408,137 468,136.5 485,135.5 498,135.5 502,136 502,153 475,153.5 465,154.5 415,154.5 408,153.5" fill="#f4f400"/><polygon points="489,160 517,159.5 517,175.5 495,176 489,175.5" fill="#f4f400"/><polygon points="997,436 999,431 1003,427 1022,426.5 1035,426 1036,425 1039,425 1040,426 1067,426.5 1071,429 1071,446 1068,449 1046,449.5 1046,451 1027,451 1026,449 1003,449 997,446" fill="#f4f400"/><polygon points="1036,722 1045,722 1049,723.5 1059,723.5 1060,722 1066,722 1066,740 1050,741 1040,740 1036,738" fill="#f4f400"/></svg>
<div class="a" style="left:1065px;top:819px;width:75px;height:23px;background:#ffffff;box-sizing:border-box;border:1px solid #a8a8a8;"></div>
<div class="t " style="left:1102px;top:825px;letter-spacing:-0.2px;transform:translateX(-50%)">Opslaan</div>
<div class="a" style="left:1146px;top:819px;width:75px;height:23px;background:#ffffff;box-sizing:border-box;border:1px solid #a8a8a8;"></div>
<div class="t " style="left:1183px;top:825px;letter-spacing:-0.2px;transform:translateX(-50%)">Annuleren</div>
</div></body></html>
